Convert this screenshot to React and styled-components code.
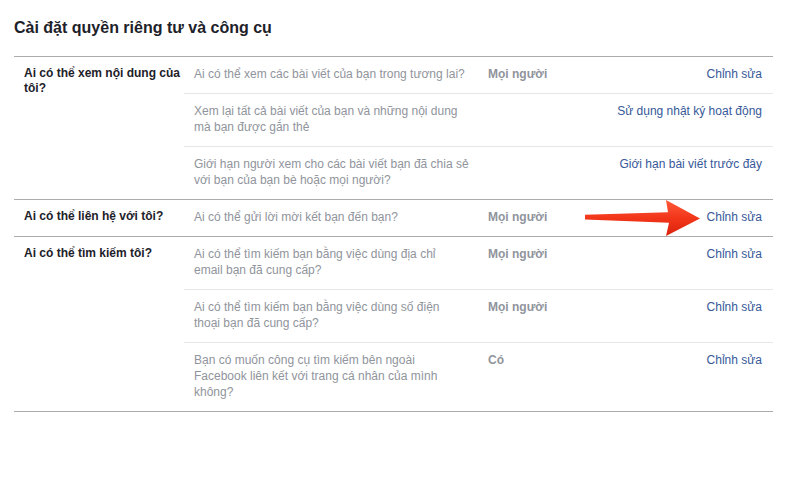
import React from 'react';
import styled, { createGlobalStyle } from 'styled-components';

const GlobalStyle = createGlobalStyle`
  html, body {
    margin: 0;
    padding: 0;
    background: #ffffff;
  }
  body {
    font-family: "Liberation Sans", Arial, Helvetica, sans-serif;
    -webkit-font-smoothing: antialiased;
  }
`;

const Page = styled.div`
  position: relative;
  width: 759px;
  padding: 18px 19px 0 14px;
`;

const Title = styled.h2`
  margin: 0 0 18px;
  font-size: 16px;
  line-height: 20px;
  font-weight: bold;
  color: #1d2129;
`;

const Table = styled.div`
  border-bottom: 1px solid #ababab;
`;

const Section = styled.div`
  display: flex;
  border-top: 1px solid #ababab;
`;

const SectionLabel = styled.div`
  width: 160px;
  flex-shrink: 0;
  padding: 9px 0 11px 10px;
  font-size: 12px;
  line-height: 15px;
  font-weight: bold;
  color: #1d2129;
`;

const Rows = styled.div`
  flex: 1;
`;

const Row = styled.div`
  display: grid;
  grid-template-columns: 284px 1fr auto;
  column-gap: 10px;
  padding: 9px 11px 11px 10px;
  border-top: ${(p) => (p.first ? 'none' : '1px solid #e6e6e6')};
  font-size: 12px;
  line-height: 16px;
`;

const Question = styled.div`
  color: #90949c;
`;

const Line = styled.span`
  display: block;
  white-space: nowrap;
`;

const Value = styled.div`
  color: #90949c;
  font-weight: bold;
`;

const Action = styled.a`
  color: #365899;
  text-align: right;
  text-decoration: none;
  cursor: pointer;
`;

const Arrow = styled.svg`
  position: absolute;
  left: 584px;
  top: 198px;
`;

// questions are kept as the lines they wrap into in the original page
const sections = [
  {
    label: 'Ai có thể xem nội dung của tôi?',
    rows: [
      { q: ['Ai có thể xem các bài viết của bạn trong tương lai?'], v: 'Mọi người', a: 'Chỉnh sửa' },
      { q: ['Xem lại tất cả bài viết của bạn và những nội dung', 'mà bạn được gắn thẻ'], v: '', a: 'Sử dụng nhật ký hoạt động' },
      { q: ['Giới hạn người xem cho các bài viết bạn đã chia sẻ', 'với bạn của bạn bè hoặc mọi người?'], v: '', a: 'Giới hạn bài viết trước đây' },
    ],
  },
  {
    label: 'Ai có thể liên hệ với tôi?',
    rows: [
      { q: ['Ai có thể gửi lời mời kết bạn đến bạn?'], v: 'Mọi người', a: 'Chỉnh sửa' },
    ],
  },
  {
    label: 'Ai có thể tìm kiếm tôi?',
    rows: [
      { q: ['Ai có thể tìm kiếm bạn bằng việc dùng địa chỉ', 'email bạn đã cung cấp?'], v: 'Mọi người', a: 'Chỉnh sửa' },
      { q: ['Ai có thể tìm kiếm bạn bằng việc dùng số điện', 'thoại bạn đã cung cấp?'], v: 'Mọi người', a: 'Chỉnh sửa' },
      { q: ['Bạn có muốn công cụ tìm kiếm bên ngoài', 'Facebook liên kết với trang cá nhân của mình', 'không?'], v: 'Có', a: 'Chỉnh sửa' },
    ],
  },
];

export default function App() {
  return (
    <Page>
      <GlobalStyle />
      <Title>Cài đặt quyền riêng tư và công cụ</Title>
      <Table>
        {sections.map((s) => (
          <Section key={s.label}>
            <SectionLabel>{s.label}</SectionLabel>
            <Rows>
              {s.rows.map((r, i) => (
                <Row key={r.q[0]} first={i === 0}>
                  <Question>
                    {r.q.map((line) => (
                      <Line key={line}>{line}</Line>
                    ))}
                  </Question>
                  <Value>{r.v}</Value>
                  <Action>{r.a}</Action>
                </Row>
              ))}
            </Rows>
          </Section>
        ))}
      </Table>
      {/* red arrow pointing at the friend-request edit link */}
      <Arrow width="120" height="40" viewBox="0 0 120 40">
        <defs>
          <linearGradient id="arrowFill" x1="0" y1="0" x2="0" y2="1">
            <stop offset="0" stopColor="#ff5a3a" />
            <stop offset="0.5" stopColor="#f2361a" />
            <stop offset="1" stopColor="#d9230d" />
          </linearGradient>
        </defs>
        <path
          d="M1 16.8 L84 14.2 L82 2 L116 20.5 L82 38 L85 24.8 L1 21.4 Z"
          fill="url(#arrowFill)"
        />
      </Arrow>
    </Page>
  );
}
